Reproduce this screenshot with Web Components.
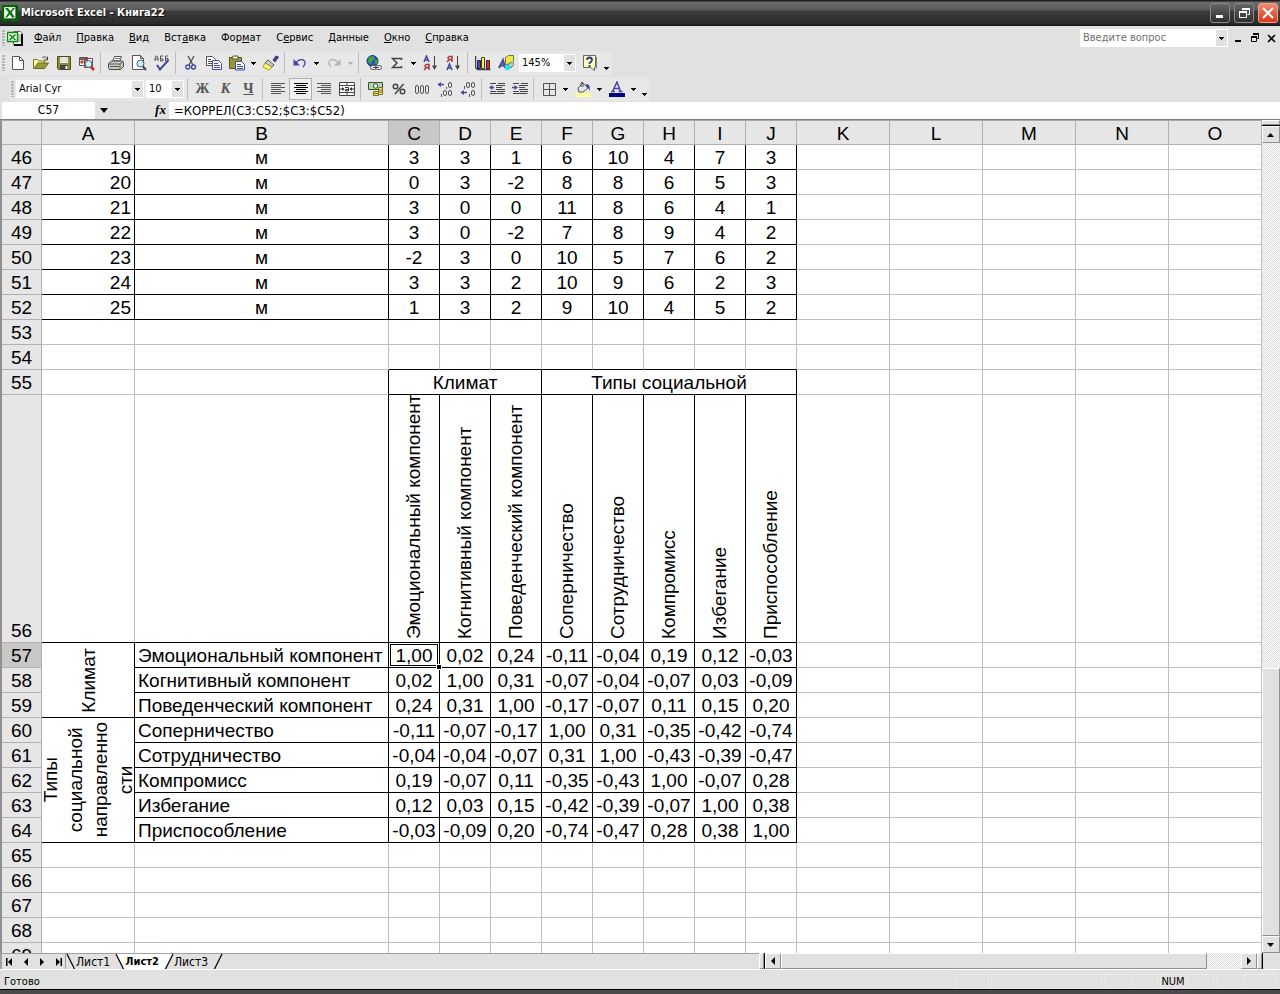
<!DOCTYPE html>
<html lang="ru">
<head>
<meta charset="utf-8">
<title>Microsoft Excel - Книга22</title>
<style>
  html, body { height: 100%; margin: 0; }
  body { background: #e1e1e1; font: 11px/14px "DejaVu Sans Condensed", "Noto Sans", sans-serif; color: #000; overflow: hidden; }
</style>
</head>
<body>
<excel-window></excel-window>
<script>
const UI_FONT = '"DejaVu Sans Condensed", "Noto Sans", sans-serif';

// 16x16 icon artwork, keyed by command name
const ICONS = {
  excel: '<rect width="16" height="16" fill="#006a00"/><path d="M2.5 2.5h11v11h-11z" fill="#fff" stroke="#cfe8cf"/><path d="M3 3h3l2.5 3.2L11 3h2L9.6 7.6 13 12.5h-3L7.8 9.2 5.2 12.5H3l3.7-5z" fill="#087a08"/><path d="M14 1v13H2" fill="none" stroke="#013d01"/>',
  book: '<path d="M6.500 1.500h7l2 2v11h-9z" fill="#fff" stroke="#666"/><path d="M15 4v11H7" fill="none" stroke="#000" stroke-width="2"/><path d="M11 5h3M11 7h3M11 9h3M11 11h3" stroke="#888"/><path d="M.5 2.500h10v9H.5z" fill="#fff" stroke="#078a07" stroke-width="1.500"/><path d="M2.500 4.500l6 5.500M8.500 4.500l-6 5.500" stroke="#078a07" stroke-width="1.600"/>',
  new: '<path d="M2.500 1.500h7l4 4v9h-11z" fill="#fff" stroke="#555"/><path d="M9.500 1.500v4h4" fill="none" stroke="#555"/>',
  open: '<path d="M.5 13.500v-9h4l1 1.500h6v2" fill="#ffff9a" stroke="#77772a"/><path d="M1 13.500l4-5.500h10.500l-4 5.500z" fill="#9a9a32" stroke="#66661c"/><path d="M9 3c2-2 4-1 5 1M14.500 1.500V5H11" fill="none" stroke="#444"/>',
  save: '<path d="M1.500 1.500h13v13h-12l-1-1z" fill="#8b8b3a" stroke="#4c4c22"/><path d="M4 2h8v6H4z" fill="#e4e4e4"/><path d="M4 10h8v4.500H4z" fill="#444"/><path d="M9.500 11h2v3h-2z" fill="#fff"/>',
  research: '<path d="M.5 2.500h8v8h-8z" fill="#fff" stroke="#555"/><path d="M1 3h7v2H1z" fill="#666"/><path d="M1.500 5.500h3v3h-3z" fill="#c33"/><path d="M5 5h3v3H5z" fill="#47b"/><path d="M5.500 3.500h8v9h-8z" fill="#fff" stroke="#555"/><path d="M6 4h3v2H6z" fill="#d33"/><circle cx="9.500" cy="9" r="3.500" fill="#bff4fa" stroke="#556"/><path d="M12 12l3 3" stroke="#d22" stroke-width="2.500"/>',
  print: '<path d="M4.500 6.500l2-5h7l-2 5" fill="#fff" stroke="#555"/><path d="M7 3.500h5M6 5.500h5" stroke="#777"/><path d="M.5 8.500l3-2.500h11l1 1.500v4l-3 3h-11l-1-2z" fill="#ccc" stroke="#444"/><path d="M1 9h11l3-2.500M12 9v5M2 11.500h9" fill="none" stroke="#555"/><path d="M8 12h3v1H8z" fill="#dd3"/>',
  preview: '<path d="M1.500.5h8l3 3v11h-11z" fill="#fff" stroke="#555"/><path d="M9.500.5v3h3" fill="none" stroke="#555"/><circle cx="9.500" cy="8.500" r="3.500" fill="#bff4fa" stroke="#555"/><path d="M12 11.500l3 3.500" stroke="#444" stroke-width="2"/>',
  spell: '<path d="M1 6V3l1-2h1l1 2v3M1 4h3M9 1H6.500v5H9V4H6.500M14 1h-2.500v5H14V3.500h-2.500" fill="none" stroke="#555"/><path d="M3 10l3 4.500L14.500 5" fill="none" stroke="#4646a4" stroke-width="2"/>',
  cut: '<path d="M5 1l5 9M11 1L6 10" fill="none" stroke="#555" stroke-width="1.400"/><circle cx="4.800" cy="12" r="2" fill="none" stroke="#4646a4" stroke-width="1.300"/><circle cx="10.500" cy="12" r="2" fill="none" stroke="#4646a4" stroke-width="1.300"/>',
  copy: '<path d="M.5 1.500h6l3 3v6h-9z" fill="#fff" stroke="#555"/><path d="M2 4.500h3M2 6.500h4M2 8.500h4" stroke="#555"/><path d="M6.500 5.500h6l3 3v6h-9z" fill="#fff" stroke="#4646a4"/><path d="M8 8.500h4M8 10.500h6M8 12.500h6" stroke="#4646a4"/>',
  paste: '<path d="M.5 2.500h12v11H.5z" fill="#9a9a32" stroke="#55551c"/><path d="M4 1h5v3H3z" fill="#ffff80" stroke="#555"/><path d="M6.500 6.500h6l3 3v5.500h-9z" fill="#fff" stroke="#4646a4"/><path d="M8 9.500h4M8 11.500h6M8 13.500h6" stroke="#4646a4"/>',
  painter: '<path d="M10 5l3-4 2.500 1L12 7z" fill="#4646a4" stroke="#33337a"/><path d="M5 5l6 5-2 2-7-4z" fill="#ccc" stroke="#555"/><path d="M2 8l7 4-3 3-6-3z" fill="#ffff7a" stroke="#99993a"/><path d="M1 14.500h4" stroke="#ff0" stroke-dasharray="1 1"/>',
  undo: '<path d="M4 8c3-5 9-4 9 0 0 2-1 3-2 4" fill="none" stroke="#4646a4" stroke-width="1.400"/><path d="M1.500 4v6.500H8z" fill="#4646a4"/>',
  redo: '<path d="M12 8C9 3 3 4 3 8c0 2 1 3 2 4" fill="none" stroke="#b4b4b4" stroke-width="1.400"/><path d="M14.500 4v6.500H8z" fill="#b4b4b4"/>',
  link: '<circle cx="6.500" cy="6" r="5.500" fill="#2b56b8" stroke="#223a78"/><path d="M3 2l4-1 2 3-3 2-1 3-3-2zM9 5l3 0-1 4-2 0z" fill="#3fa648"/><rect x="4.500" y="10.500" width="6" height="4" rx="2" fill="#eee" stroke="#555"/><rect x="9.500" y="10.500" width="6" height="4" rx="2" fill="#eee" stroke="#555"/><path d="M7 12.500h6" stroke="#444"/>',
  sum: '<path d="M12.500 5V3.500h-9L8 8l-4.500 4.500h9V11" fill="none" stroke="#444" stroke-width="1.500"/>',
  sortaz: '<path d="M1 7l2.500-6L6 7M2 5h3" fill="none" stroke="#4646a4" stroke-width="1.500"/><path d="M6 15V9.500H3Q1 11 3 12.500h3M3.500 12.500L1 15" fill="none" stroke="#a83838" stroke-width="1.500"/><path d="M11.500 1v10" stroke="#444"/><path d="M9 10.500h5L11.500 15z" fill="#444"/>',
  sortza: '<path d="M1 15l2.500-6L6 15M2 13h3" fill="none" stroke="#4646a4" stroke-width="1.500"/><path d="M6 7V1.500H3Q1 3 3 4.500h3M3.500 4.500L1 7" fill="none" stroke="#a83838" stroke-width="1.500"/><path d="M11.500 1v10" stroke="#444"/><path d="M9 10.500h5L11.500 15z" fill="#444"/>',
  chart: '<path d="M.5 1v11.500l2 2h13" fill="none" stroke="#444" stroke-width="1.500"/><path d="M2.500 5.500h3v8h-3z" fill="#4646d4" stroke="#223"/><path d="M6.500 2.500h3v11h-3z" fill="#f8f04a" stroke="#443"/><path d="M11.500 5.500h3v8h-3z" fill="#d83030" stroke="#422"/>',
  draw: '<path d="M7.500 2.500l3-2h5v6l-3 3h-5z" fill="#f3e648" stroke="#77772a"/><path d="M1 13L5 5l2 8M2.500 10.500h4" fill="none" stroke="#4646a4" stroke-width="2"/><path d="M10 9l4-2 2 2-3 4z" fill="#b5d8e0" stroke="#577"/><circle cx="9.500" cy="12.500" r="2.800" fill="#28e4ea"/>',
  help: '<path d="M1.500.5h12v12h-1v3l-4-3h-7z" fill="#ffffb4" stroke="#666"/><path d="M5 5q0-2.500 2.500-2.500T10 5q0 1.500-2.500 3v1M7.500 10v2" fill="none" stroke="#33339a" stroke-width="1.800"/><path d="M14.500 2v11.500" stroke="#888"/>',
  left: '<path d="M1 2.500h14M1 4.500h10M1 6.500h14M1 8.500h10M1 10.500h14M1 12.500h10" stroke="#555"/>',
  center: '<path d="M1 2.500h14M3 4.500h10M1 6.500h14M3 8.500h10M1 10.500h14M3 12.500h10" stroke="#000"/>',
  right: '<path d="M1 2.500h14M5 4.500h10M1 6.500h14M5 8.500h10M1 10.500h14M5 12.500h10" stroke="#555"/>',
  merge: '<path d="M.5 1.500h15v13H.5zM.5 4.500h15M.5 11.500h15M8 2v2M8 12v2" fill="#fff" stroke="#444"/><path d="M1 8h4M11 8h4M6 6.500h3.500v3.500H6.500V8.500h3" fill="none" stroke="#333"/><path d="M3 6l2.500 2L3 10zM13 6l-2.500 2 2.500 2z" fill="#333"/>',
  money: '<path d="M.5 1.500h14v7H.5z" fill="#b8d4b0" stroke="#335533"/><circle cx="7.500" cy="5" r="2.200" fill="#f0f8f0" stroke="#2a5a2a"/><path d="M10.500 6.500h4v7h-4zM5.500 10.500h5v4h-5z" fill="#f4e66a" stroke="#77702a"/><path d="M10.500 9h4M10.500 11h4M5.500 12.500h5" stroke="#77702a"/>',
  percent: '<circle cx="4.500" cy="5.500" r="2.300" fill="none" stroke="#444" stroke-width="1.400"/><circle cx="11.500" cy="10.500" r="2.300" fill="none" stroke="#444" stroke-width="1.400"/><path d="M12.500 3L4 13" stroke="#444" stroke-width="1.400"/>',
  thousands: '<rect x="1.500" y="4.500" width="3" height="8" rx="1.500" fill="none" stroke="#555"/><rect x="6.500" y="4.500" width="3" height="8" rx="1.500" fill="none" stroke="#555"/><rect x="11.500" y="4.500" width="3" height="8" rx="1.500" fill="none" stroke="#555"/>',
  incdec: '<path d="M1 3.500h6" stroke="#4646a4" stroke-width="1.500"/><path d="M4 1L.5 3.500 4 6z" fill="#4646a4"/><g fill="none" stroke="#555"><rect x="11.500" y="1.500" width="3" height="5" rx="1.500"/><rect x="6.500" y="9.500" width="3" height="5" rx="1.500"/><rect x="11.500" y="9.500" width="3" height="5" rx="1.500"/><path d="M9.500 6v2M4.500 13v3"/></g>',
  decdec: '<path d="M1 11.500h6" stroke="#4646a4" stroke-width="1.500"/><path d="M4 9L.5 11.500 4 14z" fill="#4646a4"/><g fill="none" stroke="#555"><rect x="6.500" y="1.500" width="3" height="5" rx="1.500"/><rect x="11.500" y="1.500" width="3" height="5" rx="1.500"/><rect x="11.500" y="9.500" width="3" height="5" rx="1.500"/><path d="M4.500 5v3M9.500 13v3"/></g>',
  outdent: '<path d="M1 2.500h6M1 10.500h6M9 2.500h7M7 4.500h9M7 6.500h6M7 8.500h9M1 12.500h6M8 10.500h8M3.500 12.500h12" stroke="#444"/><path d="M1 6.500h4" stroke="#4646a4" stroke-width="1.500"/><path d="M3.500 4L0 6.500 3.500 9z" fill="#4646a4"/>',
  indent: '<path d="M1 2.500h6M1 10.500h6M9 2.500h7M7 4.500h9M7 6.500h6M7 8.500h9M1 12.500h6M8 10.500h8M3.500 12.500h12" stroke="#444"/><path d="M0 6.500h4" stroke="#4646a4" stroke-width="1.500"/><path d="M2.500 4L6 6.500 2.500 9z" fill="#4646a4"/>',
  borders: '<path d="M2.500 2.500h12v12h-12zM8.500 2.500v12M2.500 8.500h12" fill="none" stroke="#555"/>',
  fill: '<path d="M3 7l5-5 5 5-5 4H4z" fill="#e4e4e4" stroke="#555"/><path d="M6 6V2q1-2 2 0v4" fill="none" stroke="#555"/><path d="M11 3q5 0 3.500 7-1-4-3.500-4z" fill="#4646a4"/><path d="M0 12h16v4H0z" fill="#ffff99"/>',
  fontcolor: '<path d="M3.500 10.500L8 1l3.500 9.500M5 7.500h5.500M2 10.500h4M9.500 10.500h4" fill="none" stroke="#4646a4" stroke-width="1.500"/><path d="M0 12h16v4H0z" fill="#000080"/>',
  arrow: '<path d="M5 7h5v1H9v1H8v1H7V9H6V8H5z"/>',
  up: '<path d="M7.500 6L11 10H4z"/>',
  down: '<path d="M4 6h7L7.500 10z"/>',
  prev: '<path d="M10 4v8L6 8z"/>',
  next: '<path d="M6 4v8l4-4z"/>',
  first: '<path d="M10 4v8L6 8zM4 4h1.500v8H4z"/>',
  last: '<path d="M6 4v8l4-4zM10.500 4H12v8h-1.500z"/>',
  min: '<path d="M4 10h7v3H4z"/>',
  docmin: '<path d="M5 10h6v2H5z"/>',
  restore: '<path d="M6.500 3.500h7v6h-2M3.500 7.500h7v5h-7z" fill="none" stroke="currentColor"/><path d="M6 3h8v2H6zM3 6h8v2H3z"/>',
  close: '<path d="M3 3l10 10M13 3L3 13" stroke="currentColor" stroke-width="2"/>'
};

class Base extends HTMLElement {
  render(html) {
    if (!this.shadowRoot) this.attachShadow({ mode: 'open' });
    this.shadowRoot.innerHTML = html;
  }
}

customElements.define('x-icon', class extends Base {
  connectedCallback() {
    this.render(`<style>:host{display:block;width:16px;height:16px;flex:none}svg{display:block;fill:currentColor}</style>
      <svg width="16" height="16" viewBox="0 0 16 16" aria-hidden="true">${ICONS[this.getAttribute('name')] || ''}</svg>`);
  }
});

customElements.define('tool-button', class extends Base {
  connectedCallback() {
    const icon = this.getAttribute('icon');
    this.render(`<style>
      :host{display:block;width:23px;height:22px;flex:none}
      :host([menu]){width:11px}
      :host([overflow]){width:11px;height:14px;align-self:end}
      button{all:unset;box-sizing:border-box;width:100%;height:100%;display:flex;align-items:center;justify-content:center;overflow:hidden}
      :host([pressed]) button{border:1px solid #b0b0b0;background:#f0f0f0}
      ::slotted(*){font:bold 14px/20px "Liberation Serif",serif;color:#555}
      ::slotted(i){font-style:italic}
    </style><button type="button" aria-label="${this.getAttribute('label')}">${icon ? `<x-icon name="${icon}"></x-icon>` : '<slot></slot>'}</button>`);
  }
});

customElements.define('tool-separator', class extends Base {
  connectedCallback() {
    this.render('<style>:host{display:block;width:1px;height:22px;margin:0 3px 0 2px;background:#bdbdbd;flex:none}</style>');
  }
});

customElements.define('tool-strip', class extends Base {
  connectedCallback() {
    this.render(`<style>
      :host{display:flex;align-items:center;height:24px;width:max-content;background:#e7e7e7;border-radius:3px}
      i{width:3px;height:16px;margin:0 1px 0 2px;background:repeating-linear-gradient(#b4b4b4 0 2px,#e7e7e7 2px 3px)}
    </style><i></i><slot></slot>`);
  }
});

customElements.define('combo-box', class extends Base {
  connectedCallback() {
    this.render(`<style>
      :host{display:grid;grid-template-columns:1fr 13px;height:18px;flex:none;background:#fff;align-items:stretch}
      select{grid-area:1/1/2/3;appearance:none;border:0;border-radius:0;margin:0;padding:0 0 0 3px;background:transparent;font:11px/14px ${UI_FONT};color:#000;min-width:0}
      span{grid-area:1/2;pointer-events:none;background:#e1e1e1;border:1px solid #fff;display:flex;align-items:center;justify-content:center;overflow:hidden}
    </style><select aria-label="${this.getAttribute('label')}"><option>${this.getAttribute('value')}</option></select><span><x-icon name="arrow"></x-icon></span>`);
  }
});

customElements.define('title-bar', class extends Base {
  connectedCallback() {
    this.render(`<style>
      :host{display:flex;align-items:center;height:26px;padding:0 2px;color:#fff;
        background:linear-gradient(#1c1c1c 0 1px,#6e6e6e 2px,#5a5a5a 10px,#3c3c3c 11px,#2b2b2b 24px,#0d0d0d 26px)}
      h1{flex:1;margin:0 3px;font:bold 11px/16px ${UI_FONT};text-shadow:1px 1px #111}
      button{all:unset;box-sizing:border-box;width:20px;height:20px;margin-left:4px;border:1px solid #888;border-radius:3px;background:linear-gradient(#666,#2e2e2e);display:flex;align-items:center;justify-content:center}
      button:last-child{background:linear-gradient(#f08a70,#d8361a);border-color:#f3a090}
    </style>
    <x-icon name="excel"></x-icon><h1>Microsoft Excel - Книга22</h1>
    <button type="button" aria-label="Свернуть"><x-icon name="min"></x-icon></button>
    <button type="button" aria-label="Восстановить"><x-icon name="restore"></x-icon></button>
    <button type="button" aria-label="Закрыть"><x-icon name="close"></x-icon></button>`);
  }
});

customElements.define('menu-bar', class extends Base {
  connectedCallback() {
    const items = ['<u>Ф</u>айл', '<u>П</u>равка', '<u>В</u>ид', 'Вст<u>а</u>вка', 'Фор<u>м</u>ат', 'С<u>е</u>рвис', '<u>Д</u>анные', '<u>О</u>кно', '<u>С</u>правка'];
    this.render(`<style>
      :host{display:flex;align-items:center;height:24px}
      i{width:3px;height:16px;margin:0 2px;background:repeating-linear-gradient(#b4b4b4 0 2px,#e1e1e1 2px 3px)}
      nav{display:flex;flex:1;margin-left:4px}
      nav button{all:unset;padding:0 8px 0 7px;font:11px/16px ${UI_FONT}}
      .ask{display:flex;width:148px;height:18px;background:#fff;margin-right:1px}
      .ask input{flex:1;min-width:0;border:0;padding:0 3px;margin:0;background:none;font:11px/14px ${UI_FONT}}
      .ask input::placeholder{color:#707070;opacity:1}
      .ask button{all:unset;width:11px;margin:1px;background:#e1e1e1;display:flex;justify-content:center;align-items:center;overflow:hidden}
      .win{all:unset;display:flex;width:17px;justify-content:center}
    </style><i></i><x-icon name="book"></x-icon>
    <nav>${items.map(t => `<button type="button">${t}</button>`).join('')}</nav>
    <div class="ask"><input placeholder="Введите вопрос" aria-label="Введите вопрос"><button type="button" aria-label="Список вопросов"><x-icon name="arrow"></x-icon></button></div>
    <button class="win" aria-label="Свернуть окно"><x-icon name="docmin"></x-icon></button>
    <button class="win" aria-label="Восстановить окно"><svg width="10" height="10"><path d="M3.500 1h5v4.500H7M1.500 4.500h5v4h-5z" fill="none" stroke="#000"/><path d="M3 0h6v2H3zM1 3h6v2H1z"/></svg></button>
    <button class="win" aria-label="Закрыть окно"><svg width="9" height="9"><path d="M1 1l7 7M8 1L1 8" stroke="#000" stroke-width="1.600"/></svg></button>`);
  }
});

const btn = (icon, label, extra = '') => `<tool-button icon="${icon}" label="${label}" ${extra}></tool-button>`;
const arrow = label => btn('arrow', label, 'menu');
const sep = '<tool-separator></tool-separator>';

customElements.define('tool-bars', class extends Base {
  connectedCallback() {
    this.render(`<style>
      :host{display:flex;flex-direction:column;gap:2px;padding-top:1px;height:51px;box-sizing:border-box;align-items:start}
      .fmt{margin-left:9px}
      .zoom{width:57px;margin:0 2px}.face{width:128px;margin-left:1px}.size{width:38px;margin:0 1px 0 2px}
    </style>
    <tool-strip>
      ${btn('new', 'Создать')}${btn('open', 'Открыть')}${btn('save', 'Сохранить')}${btn('research', 'Справочники')}${sep}
      ${btn('print', 'Печать')}${btn('preview', 'Просмотр')}${btn('spell', 'Орфография')}${sep}
      ${btn('cut', 'Вырезать')}${btn('copy', 'Копировать')}${btn('paste', 'Вставить')}${arrow('Варианты вставки')}${btn('painter', 'Формат по образцу')}${sep}
      ${btn('undo', 'Отменить')}${arrow('Список отмены')}${btn('redo', 'Вернуть')}<tool-button icon="arrow" menu label="Список возврата" style="color:#b4b4b4"></tool-button>${sep}
      ${btn('link', 'Гиперссылка')}${btn('sum', 'Автосумма')}${arrow('Функции')}${btn('sortaz', 'По возрастанию')}${btn('sortza', 'По убыванию')}${sep}
      ${btn('chart', 'Диаграмма')}${btn('draw', 'Рисование')}<combo-box class="zoom" label="Масштаб" value="145%"></combo-box>
      ${btn('help', 'Справка')}${btn('arrow', 'Параметры панели', 'overflow')}
    </tool-strip>
    <tool-strip class="fmt">
      <combo-box class="face" label="Шрифт" value="Arial Cyr"></combo-box><combo-box class="size" label="Размер" value="10"></combo-box>${sep}
      <tool-button label="Полужирный"><b>Ж</b></tool-button><tool-button label="Курсив"><i>К</i></tool-button><tool-button label="Подчеркнутый"><u>Ч</u></tool-button>${sep}
      ${btn('left', 'По левому краю')}${btn('center', 'По центру', 'pressed')}${btn('right', 'По правому краю')}${btn('merge', 'Объединить')}${sep}
      ${btn('money', 'Денежный формат')}${btn('percent', 'Процентный формат')}${btn('thousands', 'С разделителями')}${btn('incdec', 'Увеличить разрядность')}${btn('decdec', 'Уменьшить разрядность')}${sep}
      ${btn('outdent', 'Уменьшить отступ')}${btn('indent', 'Увеличить отступ')}${sep}
      ${btn('borders', 'Границы')}${arrow('Виды границ')}${btn('fill', 'Цвет заливки')}${arrow('Цвета заливки')}${btn('fontcolor', 'Цвет шрифта')}${arrow('Цвета шрифта')}${btn('arrow', 'Параметры панели', 'overflow')}
    </tool-strip>`);
  }
});

customElements.define('formula-bar', class extends Base {
  connectedCallback() {
    this.render(`<style>
      :host{display:grid;grid-template-columns:93px 17px 40px 17px 1fr;align-items:center;height:19px;padding-left:2px;border-bottom:1px solid #808080;box-sizing:border-box}
      input{border:0;padding:0;margin:0;height:17px;min-width:0;box-sizing:border-box;background:#fff;color:#000}
      .name{text-align:center;font:12px/16px ${UI_FONT}}
      .formula{grid-column:5;padding-left:5px;font:13px/16px ${UI_FONT}}
      button{all:unset;display:flex;justify-content:center}
      .fx{grid-column:4;font:italic bold 13px/16px "Liberation Serif",serif}
    </style>
    <input class="name" aria-label="Имя ячейки" value="C57"><button aria-label="Список имен"><svg width="8" height="5"><path d="M0 0h8L4 5z"/></svg></button>
    <button class="fx" aria-label="Вставка функции">fx</button><input class="formula" aria-label="Строка формул" value="=КОРРЕЛ(C3:C52;$C3:$C52)">`);
  }
});

const TOP = [
  [19, 3, 3, 1, 6, 10, 4, 7, 3], [20, 0, 3, -2, 8, 8, 6, 5, 3], [21, 3, 0, 0, 11, 8, 6, 4, 1], [22, 3, 0, -2, 7, 8, 9, 4, 2],
  [23, -2, 3, 0, 10, 5, 7, 6, 2], [24, 3, 3, 2, 10, 9, 6, 2, 3], [25, 1, 3, 2, 9, 10, 4, 5, 2]];
const NAMES = ['Эмоциональный компонент', 'Когнитивный компонент', 'Поведенческий компонент', 'Соперничество', 'Сотрудничество', 'Компромисс', 'Избегание', 'Приспособление'];
const CORR = [
  '1,00 0,02 0,24 -0,11 -0,04 0,19 0,12 -0,03', '0,02 1,00 0,31 -0,07 -0,04 -0,07 0,03 -0,09',
  '0,24 0,31 1,00 -0,17 -0,07 0,11 0,15 0,20', '-0,11 -0,07 -0,17 1,00 0,31 -0,35 -0,42 -0,74',
  '-0,04 -0,04 -0,07 0,31 1,00 -0,43 -0,39 -0,47', '0,19 -0,07 0,11 -0,35 -0,43 1,00 -0,07 0,28',
  '0,12 0,03 0,15 -0,42 -0,39 -0,07 1,00 0,38', '-0,03 -0,09 0,20 -0,74 -0,47 0,28 0,38 1,00'].map(r => r.split(' '));

customElements.define('sheet-grid', class extends Base {
  connectedCallback() {
    const blank = n => '<td></td>'.repeat(n);
    const row = (n, cells, cls = '') => `<tr class="${cls}"><th scope="row" class="${n === 57 ? 'on' : ''}">${n}</th>${cells}</tr>`;
    let body = '';
    TOP.forEach((r, i) => {
      body += row(46 + i, `<td class="k num">${r[0]}</td><td class="k">м</td>${r.slice(1).map(v => `<td class="k">${v}</td>`).join('')}${blank(5)}`);
    });
    body += row(53, blank(15));
    body += row(54, `${blank(2)}${'<td class="kb"></td>'.repeat(8)}${blank(5)}`);
    body += row(55, `<td></td><td class="kr"></td><td class="k" colspan="3">Климат</td><td class="k" colspan="5">Типы социальной</td>${blank(5)}`);
    body += row(56, `<td class="kb"></td><td class="k"></td>${NAMES.map(n => `<td class="k v"><div>${n}</div></td>`).join('')}${blank(5)}`, 'tall');
    CORR.forEach((r, i) => {
      const side = i === 0 ? '<td class="k side" rowspan="3"><div>Климат</div></td>'
        : i === 3 ? '<td class="k side" rowspan="5"><div>Типы<br>социальной<br>направленно<br>сти</div></td>' : '';
      body += row(57 + i, `${side}<td class="k name">${NAMES[i]}</td>${r.map((v, j) => `<td class="k${i + j === 0 ? ' sel' : ''}">${v}</td>`).join('')}${blank(5)}`);
    });
    for (let n = 65; n < 70; n++) body += row(n, blank(15));
    this.render(`<style>
      :host{display:block;overflow:hidden;background:#fff;border-left:2px solid #909090;border-top:1px solid #a8a8a8;min-width:0;min-height:0}
      table{border-collapse:separate;border-spacing:0;table-layout:fixed;width:1260px;font:19px/22px "Liberation Sans",Arial,sans-serif}
      .rh{width:40px}.m{width:93px}.b{width:254px}.s{width:51px}
      tr{height:25px}
      th,td{box-sizing:border-box;height:25px;padding:2px 0 0;border:solid #c0c0c0;border-width:0 1px 1px 0;text-align:center;white-space:nowrap;overflow:hidden}
      th{background:#e6e6e6;border-color:#b0b0b0;font-weight:400}
      thead tr,thead th{height:24px;line-height:21px}
      th.on{background:#c8c8c8}
      .k{border-color:#000}.kb{border-bottom-color:#000}.kr{border-right-color:#000}
      .num{text-align:right;padding-right:3px}
      .name{text-align:left;padding-left:3px}
      .tall{height:248px}.tall th,.v{vertical-align:bottom}
      .v,.side{padding:0}
      .v div,.side div{writing-mode:vertical-rl;transform:rotate(180deg);line-height:25px}
      .v div{height:244px;width:25px;margin:0 13px 3px 12px;text-align:left}
      .side div{text-align:center;width:max-content;margin:0 0 0 -4px}
      .side[rowspan="3"] div{margin:0 auto}
      .sel{position:relative;overflow:visible}
      .sel::before{content:"";position:absolute;inset:1px;border:1px solid #000}
      .sel::after{content:"";position:absolute;right:-3px;bottom:-3px;width:4px;height:4px;background:#000;border:1px solid #fff}
    </style>
    <table aria-label="Лист2"><colgroup><col class="rh"><col class="m"><col class="b">${'<col class="s">'.repeat(8)}${'<col class="m">'.repeat(5)}</colgroup>
    <thead><tr><th></th>${[...'ABCDEFGHIJKLMNO'].map(c => `<th scope="col" class="${c === 'C' ? 'on' : ''}">${c}</th>`).join('')}</tr></thead>
    <tbody>${body}</tbody></table>`);
  }
});

const BEVEL = 'background:#e1e1e1;border:1px solid;border-color:#fff #909090 #909090 #fff;box-sizing:border-box';
const DITHER = 'background:repeating-conic-gradient(#fff 0 25%,#dcdcdc 0 50%) 0 0/2px 2px';

customElements.define('scroll-bar', class extends Base {
  connectedCallback() {
    const h = this.hasAttribute('horizontal');
    this.render(`<style>
      :host{display:flex;flex-direction:${h ? 'row' : 'column'};${DITHER};min-width:0;min-height:0}
      button{all:unset;${BEVEL};display:flex;align-items:center;justify-content:center;overflow:hidden;flex:none;${h ? 'width:16px' : 'height:17px'}}
      .gap{flex:${h ? 0 : 526} 1 0}.thumb{${BEVEL};flex:${h ? 425 : 267} 1 0}.rest{flex:${h ? 34 : 0} 1 0}
      .split{${BEVEL};flex:none;${h ? 'width:5px' : 'height:5px'}}
      .line{background:#000;flex:none;${h ? 'width:1px' : 'height:1px'}}
    </style><div class="split"></div><div class="line"></div>
    <button type="button" aria-label="Назад"><x-icon name="${h ? 'prev' : 'up'}"></x-icon></button>
    <div class="gap"></div><div class="thumb"></div><div class="rest"></div>
    <button type="button" aria-label="Вперед"><x-icon name="${h ? 'next' : 'down'}"></x-icon></button>${h ? '<div class="split"></div><div class="line"></div>' : ''}`);
  }
});

customElements.define('sheet-tabs', class extends Base {
  connectedCallback() {
    const slash = '<svg width="10" height="16"><path d="M1 16L9 0" stroke="#000" stroke-width="1.200"/></svg>';
    const back = '<svg width="10" height="16"><path d="M1 0l8 16" stroke="#000" stroke-width="1.200"/></svg>';
    this.render(`<style>
      :host{display:flex;height:16px;align-items:stretch;border-left:2px solid #a0a0a0;box-sizing:border-box;background:#e1e1e1}
      .nav{display:flex;width:63px;border-top:1px solid #a0a0a0;border-right:1px solid #a0a0a0}
      .nav button{all:unset;width:16px;height:15px;display:flex}
      .tabs{display:flex;flex:1;border-top:1px solid #a0a0a0}
      .tabs a{color:#000;text-decoration:none;padding-right:5px;font:12px/16px ${UI_FONT}}
      .tabs a[aria-current]{font-weight:bold;background:#fff;font-size:11px}
      .tabs svg{flex:none}.l{background:linear-gradient(to top right,#e1e1e1 50%,#fff 50%)}.r{background:linear-gradient(to bottom right,#fff 50%,#e1e1e1 50%)}
      scroll-bar{flex:none;width:calc(40% - 7px)}
      .corner{width:17px}
    </style>
    <div class="nav">${[['first', 'Первый лист'], ['prev', 'Предыдущий лист'], ['next', 'Следующий лист'], ['last', 'Последний лист']].map(([i, l]) => `<button type="button" aria-label="${l}"><x-icon name="${i}"></x-icon></button>`).join('')}</div>
    <div class="tabs">${back}<a href="#1">Лист1</a><span class="l">${back}</span><a href="#2" aria-current="page">Лист2</a><span class="r">${slash}</span><a href="#3">Лист3</a>${slash}</div>
    <scroll-bar horizontal></scroll-bar><div class="corner"></div>`);
  }
});

customElements.define('status-bar', class extends Base {
  connectedCallback() {
    this.render(`<style>
      :host{display:flex;align-items:center;height:25px;padding:4px 4px 4px;box-sizing:border-box;gap:2px;background:linear-gradient(#fff 0 1px,#e1e1e1 1px 20px,#000 20px 21px,#4c4a4c 21px)}
      span{flex:1}
      div{height:15px;width:26px;border:1px solid #e9e9e9;box-sizing:border-box;text-align:center;line-height:14px}
      div:nth-of-type(1){width:34px}div:nth-of-type(2){width:111px}div:nth-of-type(8){width:32px}
    </style><span>Готово</span><div></div><div></div><div></div><div></div><div>NUM</div><div></div><div></div><div></div>`);
  }
});

customElements.define('excel-window', class extends Base {
  connectedCallback() {
    this.render(`<style>
      :host{display:flex;flex-direction:column;height:100vh}
      title-bar,menu-bar,tool-bars,formula-bar,sheet-tabs,status-bar{flex:none}
      main{flex:1;min-height:0;display:grid;grid-template-columns:1fr 18px}
    </style>
    <title-bar></title-bar><menu-bar></menu-bar><tool-bars></tool-bars><formula-bar></formula-bar>
    <main><sheet-grid></sheet-grid><scroll-bar></scroll-bar></main>
    <sheet-tabs></sheet-tabs><status-bar></status-bar>`);
  }
});
</script>
</body>
</html>
